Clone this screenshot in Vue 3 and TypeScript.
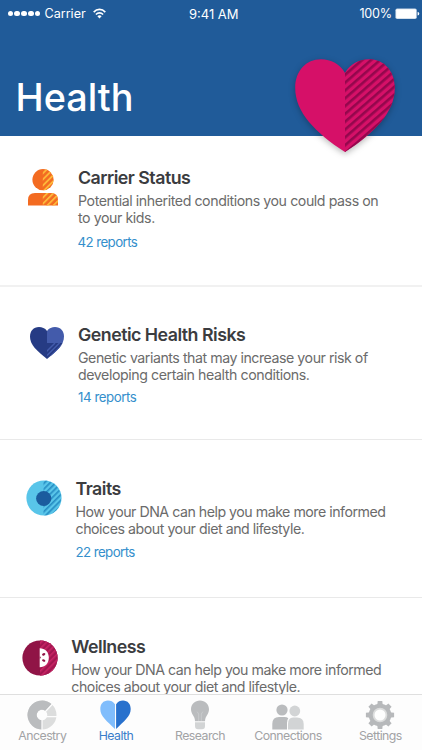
<script setup lang="ts">
type IconName = 'person' | 'heart' | 'eye' | 'fruit'

interface Section {
  icon: IconName
  title: string
  lines: string[]
  reports: string
}

const sections: Section[] = [
  {
    icon: 'person',
    title: 'Carrier Status',
    lines: ['Potential inherited conditions you could pass on', 'to your kids.'],
    reports: '42 reports',
  },
  {
    icon: 'heart',
    title: 'Genetic Health Risks',
    lines: ['Genetic variants that may increase your risk of', 'developing certain health conditions.'],
    reports: '14 reports',
  },
  {
    icon: 'eye',
    title: 'Traits',
    lines: ['How your DNA can help you make more informed', 'choices about your diet and lifestyle.'],
    reports: '22 reports',
  },
  {
    icon: 'fruit',
    title: 'Wellness',
    lines: ['How your DNA can help you make more informed', 'choices about your diet and lifestyle.'],
    reports: '',
  },
]

const tabs: string[] = ['Ancestry', 'Health', 'Research', 'Connections', 'Settings']
const activeTab = 'Health'
const teeth: number[] = [0, 45, 90, 135, 180, 225, 270, 315]
</script>

<template>
  <div class="screen">
    <header class="header">
      <div class="status">
        <div class="carrier">
          <span class="signal"><i v-for="n in 5" :key="n" /></span>
          <span class="carrier-name">Carrier</span>
          <svg class="wifi" width="13" height="11" viewBox="0 0 13 11">
            <g fill="none" stroke="#fff" stroke-width="1.6">
              <path d="M0.7 4.1 C4 0.5 9 0.5 12.3 4.1" />
              <path d="M2.9 6.5 C5 4.3 8 4.3 10.1 6.5" />
            </g>
            <path d="M4.4 8.2 C5.6 7 7.4 7 8.6 8.2 L6.5 10.4 Z" fill="#fff" />
          </svg>
        </div>
        <span class="time">9:41 AM</span>
        <div class="power">
          <span class="percent">100%</span>
          <svg width="25" height="12" viewBox="0 0 25 12">
            <rect x="0.4" y="0.4" width="21.4" height="10.6" rx="1.8" fill="#fff" fill-opacity="0.75" />
            <rect x="1.2" y="1.2" width="19.8" height="9" rx="1" fill="#fff" />
            <path d="M22.6 3.8 Q24.3 4.3 24.3 5.7 Q24.3 7.1 22.6 7.6 Z" fill="#fff" />
          </svg>
        </div>
      </div>
      <h1>Health</h1>
      <svg class="hero-heart" width="100" height="94" viewBox="0 0 100 94">
        <defs>
          <pattern id="hero-stripes" width="20" height="5.9" patternUnits="userSpaceOnUse" patternTransform="translate(50 22) rotate(-41)">
            <rect width="20" height="2.6" fill="#94074d" />
          </pattern>
        </defs>
        <path d="M50 14 C45 5 36 .3 26 .3 C11 .3 .2 12 .2 29 C.2 53 20 73.500 50 93 C80 73.500 99.800 53 99.800 29 C99.800 12 89 .3 74 .3 C64 .3 55 5 50 14 Z" fill="#d61068" />
        <path d="M50 14 C55 5 64 .3 74 .3 C89 .3 99.800 12 99.800 29 C99.800 53 80 73.500 50 93 Z" fill="url(#hero-stripes)" />
      </svg>
    </header>

    <main>
      <section v-for="s in sections" :key="s.title" class="row" :class="s.icon">
        <div class="icon">
          <svg v-if="s.icon === 'person'" width="30" height="37" viewBox="0 0 30 37">
            <defs>
              <pattern id="person-stripes" width="10" height="4.3" patternUnits="userSpaceOnUse" patternTransform="translate(15 3) rotate(-45)">
                <rect width="10" height="1.8" fill="#fdb739" />
              </pattern>
              <clipPath id="person-half"><rect x="14.800" width="16" height="37" /></clipPath>
            </defs>
            <g fill="#f36b21">
              <circle cx="15" cy="10.700" r="10.600" />
              <path d="M0 36.500 V31 Q0 24 7 24 H23 Q30 24 30 31 V36.500 Z" />
            </g>
            <g fill="url(#person-stripes)" clip-path="url(#person-half)">
              <circle cx="15" cy="10.700" r="10.600" />
              <path d="M0 36.500 V31 Q0 24 7 24 H23 Q30 24 30 31 V36.500 Z" />
            </g>
          </svg>

          <svg v-else-if="s.icon === 'heart'" width="34" height="32" viewBox="0 0 34 32">
            <defs>
              <clipPath id="risk-half"><path d="M17 4 C19 1 22 0 25 0 C30.500 0 34 4 34 9.500 C34 18 27 24 17 32 Z" /></clipPath>
            </defs>
            <path d="M17 4 C15 1 12 0 9 0 C3.500 0 0 4 0 9.500 C0 18 7 24 17 32 Z" fill="#263b84" />
            <g clip-path="url(#risk-half)">
              <rect x="17" width="17" height="16" fill="#435bab" />
              <rect x="17" y="16" width="17" height="16" fill="#263b84" />
              <path d="M16 25 L25 16 M17 28.500 L29.500 16 M21 29 L34 16" stroke="#435bab" stroke-width="1.500" />
            </g>
          </svg>

          <svg v-else-if="s.icon === 'eye'" width="36" height="36" viewBox="0 0 36 36">
            <defs>
              <pattern id="eye-stripes" width="10" height="4" patternUnits="userSpaceOnUse" patternTransform="translate(18 2) rotate(-45)">
                <rect width="10" height="1.700" fill="#278fc5" />
              </pattern>
            </defs>
            <circle cx="18" cy="18" r="17.600" fill="#59c5e9" />
            <path d="M17.500 .4 A17.600 17.600 0 0 1 17.500 35.600 Z" fill="url(#eye-stripes)" />
            <circle cx="17.700" cy="18.500" r="7.600" fill="#1b5c9e" />
          </svg>

          <svg v-else width="36" height="36" viewBox="0 0 36 36">
            <defs>
              <pattern id="fruit-stripes" width="10" height="4" patternUnits="userSpaceOnUse" patternTransform="translate(18 2) rotate(-45)">
                <rect width="10" height="1.600" fill="#c92465" />
              </pattern>
            </defs>
            <circle cx="18" cy="18" r="17.600" fill="#901446" />
            <path d="M18 .4 A17.600 17.600 0 0 1 18 35.600 Z" fill="#a21650" />
            <path d="M18 .4 A17.600 17.600 0 0 1 18 35.600 Z" fill="url(#fruit-stripes)" />
            <path d="M17.700 8.300 C23 8.300 26.800 12 26.800 17.800 C26.800 23.500 23 27.300 17.700 27.300 Z" fill="#fff" />
            <g fill="#901446">
              <ellipse cx="21.700" cy="14.300" rx="1.700" ry="1.200" transform="rotate(-25 21.700 14.300)" />
              <ellipse cx="21.700" cy="20.500" rx="1.700" ry="1.200" transform="rotate(25 21.700 20.500)" />
              <path d="M17.700 16.500 A1.100 1.100 0 0 1 17.700 18.700 Z" />
            </g>
          </svg>
        </div>
        <div class="copy">
          <h2>{{ s.title }}</h2>
          <p><span v-for="line in s.lines" :key="line">{{ line }}</span></p>
          <a v-if="s.reports">{{ s.reports }}</a>
        </div>
      </section>
    </main>

    <nav class="tabs">
      <div v-for="t in tabs" :key="t" class="tab" :class="{ active: t === activeTab }">
        <svg v-if="t === 'Ancestry'" width="30" height="30" viewBox="0 0 30 30">
          <g fill="none" stroke-width="9.200">
            <circle cx="15" cy="15" r="9.900" stroke="#dcdddd" />
            <path d="M15 24.900 A9.900 9.900 0 1 1 21.500 7.500" stroke="#babcbe" />
          </g>
          <path d="M15 19 V30 M18 12 L26 3.500 M19 16.600 H30" stroke="#fdfdfd" stroke-width="1.200" />
        </svg>
        <svg v-else-if="t === 'Health'" width="31" height="30" viewBox="0 0 31 30">
          <path d="M15 4.300 C13 1.300 10.800 .5 8 .5 C3.300 .5 .3 4 .3 9 C.3 16.500 7 21 15 29 Z" fill="#80bdfc" />
          <path d="M16.100 4.300 C18 1.300 20.200 .5 23 .5 C27.700 .5 30.700 4 30.700 9 C30.700 16.500 24 21 16.100 29 Z" fill="#2871cd" />
        </svg>
        <svg v-else-if="t === 'Research'" width="22" height="30" viewBox="0 0 22 30">
          <path d="M6 21.300 C6 16 2 14.500 2 9.300 C2 4 6 .5 11 .5 C16 .5 20 4 20 9.300 C20 14.500 16 16 16 21.300 Z" fill="#babcbe" />
          <path d="M9.700 21 V14 L8.200 11.700 M12.300 21 V14 L13.800 11.700" fill="none" stroke="#cfd1d2" stroke-width=".7" />
          <path d="M6 22.300 H16 V26 Q16 29.300 13 29.300 H9 Q6 29.300 6 26 Z" fill="#d2d4d5" />
        </svg>
        <svg v-else-if="t === 'Connections'" width="32" height="30" viewBox="0 0 32 30">
          <g fill="#babcbe">
            <circle cx="10" cy="10" r="5.600" />
            <path d="M.3 29.500 V24 Q.3 17 7 17 H12.500 Q15 17 16.300 18.300 Q15 20 15 23 V29.500 Z" />
          </g>
          <g fill="#d2d4d5">
            <circle cx="22.800" cy="11" r="5.400" />
            <path d="M16 29.500 V24 Q16 17.500 21 17.500 H25 Q31.700 17.500 31.700 24 V29.500 Z" />
          </g>
        </svg>
        <svg v-else width="30" height="30" viewBox="0 0 30 30">
          <g fill="#b7b9bb">
            <circle cx="15" cy="15" r="11.300" />
            <path v-for="angle in teeth" :key="angle" d="M12.200 6 L12.700 .9 H17.300 L17.800 6 Z" :transform="`rotate(${angle} 15 15)`" />
          </g>
          <circle cx="15" cy="15" r="6.400" fill="#fefefe" stroke="#dcdddd" stroke-width="1.800" />
        </svg>
        <span>{{ t }}</span>
      </div>
    </nav>
  </div>
</template>

<style>
body {
  margin: 0;
  overflow: hidden;
}
</style>

<style scoped>
.screen {
  width: 422px;
  height: 750px;
  overflow: hidden;
  display: flex;
  flex-direction: column;
  background: #fff;
  font-family: Inter, "Liberation Sans", sans-serif;
}

h1,
h2,
p {
  margin: 0;
}

svg {
  display: block;
  flex: none;
}

.header {
  position: relative;
  flex: none;
  height: 136px;
  background: #205b99;
  color: #fff;
}

.status {
  display: grid;
  grid-template-columns: 1fr auto 1fr;
  align-items: center;
  height: 27px;
  padding: 0 2px 0 7.500px;
  font-size: 12.600px;
}

.time {
  font-size: 13px;
}

.percent {
  letter-spacing: -0.2px;
}

.carrier,
.power {
  display: flex;
  align-items: center;
}

.signal {
  display: flex;
  gap: 1.500px;
}

.signal i {
  width: 5.400px;
  height: 5.400px;
  border-radius: 50%;
  background: #fff;
}

.carrier-name {
  margin-left: 4px;
}

.wifi {
  margin-left: 7.500px;
}

.power {
  justify-content: flex-end;
  gap: 3px;
}

h1 {
  padding: 47px 0 0 15.500px;
  font-size: 37.800px;
  line-height: 46px;
  font-weight: 500;
}

.hero-heart {
  position: absolute;
  left: 294.500px;
  top: 59px;
  overflow: visible;
  filter: drop-shadow(0 2px 3px rgba(0, 0, 0, 0.28));
}

main {
  flex: 1;
  min-height: 0;
  overflow: hidden;
}

.row {
  display: flex;
  align-items: flex-start;
  box-sizing: border-box;
  border-bottom: 1px solid #e9e9e9;
}

.copy {
  display: flex;
  flex-direction: column;
  align-items: flex-start;
  white-space: nowrap;
}

.icon {
  flex: none;
}

.person {
  height: 151px;
  padding: 30.500px 0 0 28px;
  border-bottom: 2px solid #f1f1f1;
}

.person .icon {
  width: 50px;
  padding-top: 2.500px;
}

.heart {
  height: 153px;
  padding: 36.500px 0 0 29.500px;
}

.heart .icon {
  width: 48.500px;
  padding-top: 3.500px;
}

.eye {
  height: 158px;
  padding: 37.500px 0 0 25.500px;
}

.eye .icon {
  width: 50px;
  padding-top: 2.800px;
}

.fruit {
  height: 157px;
  padding: 38px 0 0 22.300px;
}

.fruit .icon {
  width: 49px;
  padding-top: 3.500px;
}

h2 {
  font-size: 17.800px;
  line-height: 22px;
  font-weight: 600;
  color: #3b3c3f;
  letter-spacing: -0.520px;
}

p {
  margin-top: 3px;
  font-size: 14.200px;
  line-height: 17px;
  letter-spacing: -0.430px;
  color: #6b6b6b;
}

.heart p span:first-child,
.eye p span:last-child,
.fruit p span:last-child {
  letter-spacing: -0.470px;
}

.eye p span:first-child,
.fruit p span:first-child {
  letter-spacing: -0.490px;
}

p span {
  display: block;
}

a {
  margin-top: 7px;
  font-size: 13.300px;
  line-height: 17px;
  letter-spacing: -0.580px;
  color: #348fcc;
}

.person a {
  margin-top: 8px;
  margin-left: -0.500px;
}

.heart a {
  margin-top: 6px;
  letter-spacing: -0.450px;
}

.tabs {
  flex: none;
  display: grid;
  grid-template-columns: 54.600px 92.800px 75.200px 100.800px 84px;
  box-sizing: border-box;
  height: 56px;
  padding: 5px 0 0 15px;
  border-top: 1px solid #dfdfdf;
  background: #fdfdfd;
}

.tab {
  display: flex;
  flex-direction: column;
  align-items: center;
  font-size: 12.300px;
  line-height: 12px;
  letter-spacing: -0.530px;
  color: #a2a3a5;
}

.tab.active {
  color: #3a7dca;
}
</style>
